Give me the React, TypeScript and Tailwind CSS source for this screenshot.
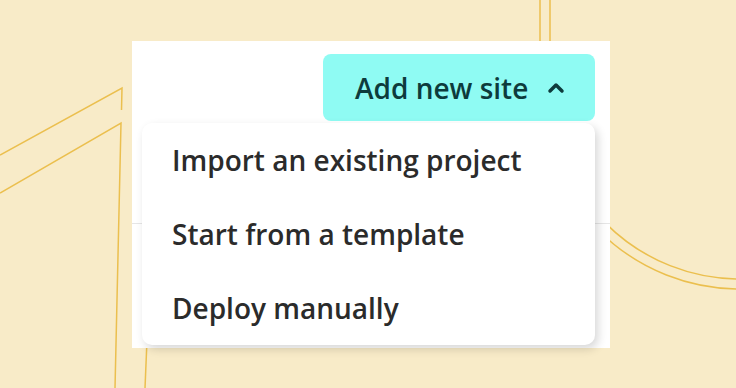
import { ChevronUp } from "lucide-react";

const menuItems = ["Import an existing project", "Start from a template", "Deploy manually"];

function Backdrop() {
  return (
    <svg className="absolute inset-0 h-full w-full" viewBox="0 0 736 388" fill="none">
      <g stroke="#ebbf4e" strokeWidth="1.5">
        <path d="M0 155 L122 88 L121.5 110" />
        <path d="M0 193 L121 123 L115 388" />
        <path d="M147 340 L145 388" />
        <path d="M540 -5 V89 A200 200 0 0 0 740 289" />
        <path d="M550 -5 V89 A190 190 0 0 0 740 279" />
      </g>
    </svg>
  );
}

export default function App() {
  return (
    <div className="relative h-[388px] w-[736px] overflow-hidden bg-[#f8ebc8] font-['Open_Sans',sans-serif]">
      <Backdrop />
      <div className="relative ml-[132px] mt-[41px] flex h-[307px] w-[478px] flex-col bg-white">
        <div className="absolute left-0 right-0 top-[182px] h-px bg-[#e6e6e6]" />
        <div className="flex justify-end pr-[15px] pt-[13px]">
          <button
            type="button"
            className="flex h-[67px] w-[272px] items-center gap-[16px] rounded-lg bg-[#8ffbf3] pl-8 text-[28px] font-semibold text-[#0d3b3c]"
          >
            Add new site
            <ChevronUp className="h-[24px] w-[24px]" strokeWidth={3.5} />
          </button>
        </div>
        <div className="relative ml-[10px] mt-[2px] w-[453px] rounded-[10px] bg-white shadow-[3px_4px_10px_rgba(0,0,0,0.16)]">
          {menuItems.map((item) => (
            <div key={item} className="flex h-[74px] items-center pl-[30px] text-[28px] font-semibold text-[#2b2b2b]">
              {item}
            </div>
          ))}
        </div>
      </div>
    </div>
  );
}
